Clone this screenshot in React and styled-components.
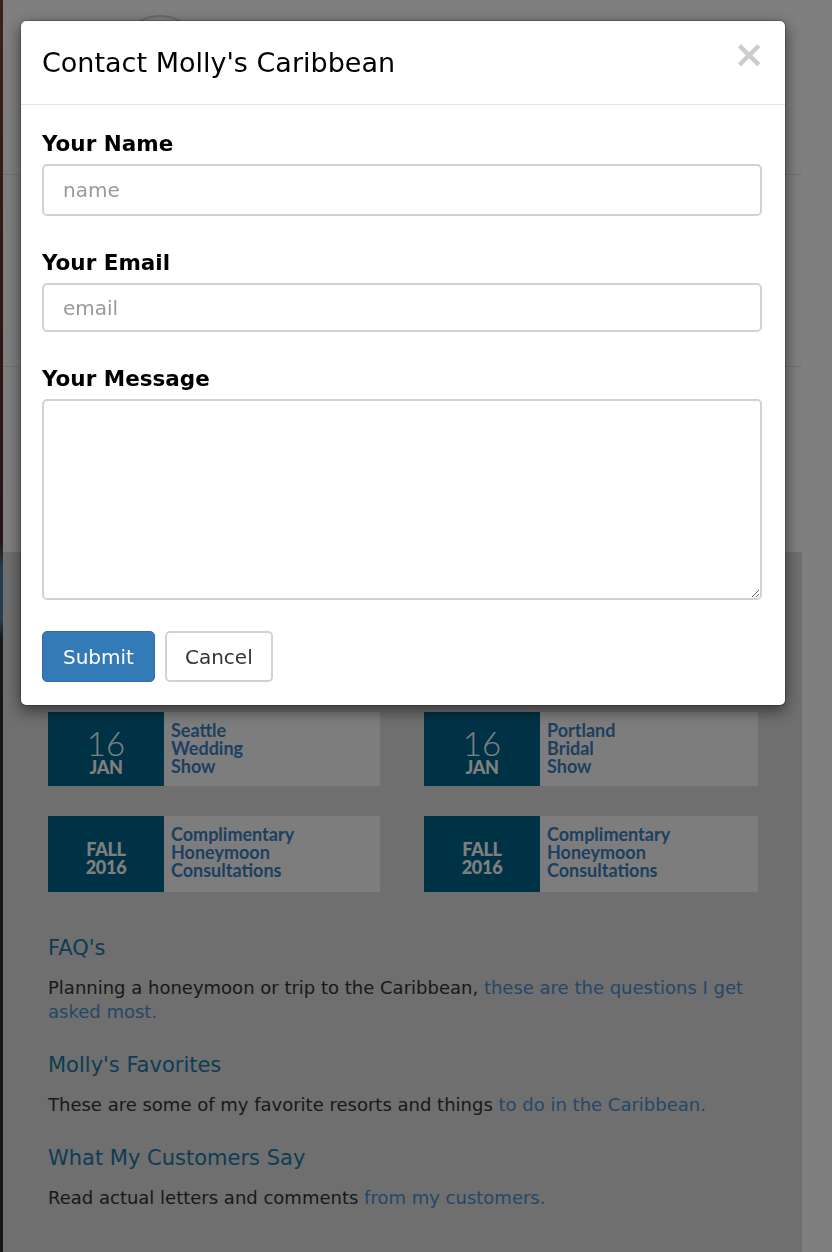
import React from 'react';
import styled, { createGlobalStyle } from 'styled-components';

const GlobalStyle = createGlobalStyle`
  html, body { margin: 0; padding: 0; background: #ffffff; }
  body { font-family: "DejaVu Sans", Verdana, sans-serif; color: #333; overflow: hidden; }
  * { box-sizing: border-box; }
`;

/* ---------- underlying page ---------- */
const Page = styled.div`
  display: flex;
  width: 832px;
  height: 1252px;
  background: #ffffff;
`;

const EdgePhoto = styled.div`
  width: 3px;
  flex: none;
  background: linear-gradient(
    to bottom,
    #7a4036 0px,
    #5e302c 300px,
    #4e2a2a 540px,
    #4a7aa0 570px,
    #4a7aa0 620px,
    #2c2c2c 640px,
    #2c2c2c 100%
  );
`;

const Main = styled.div`
  width: 799px;
  flex: none;
  display: flex;
  flex-direction: column;
`;

const TopSection = styled.section`
  height: 552px;
  display: flex;
  flex-direction: column;
`;

const Masthead = styled.div`
  height: 175px;
  border-bottom: 1px solid #e4e4e4;
  padding: 15px 0 0 114px;
`;

const Avatar = styled.div`
  width: 86px;
  height: 86px;
  border-radius: 50%;
  border: 2px solid #d4d4d4;
  background: #ffffff;
`;

const Band = styled.div`
  height: 192px;
  border-bottom: 1px solid #e4e4e4;
`;

const GreySection = styled.section`
  flex: 1;
  background: #dedede;
  padding: 160px 0 0 45px;
`;

const EventGrid = styled.div`
  display: grid;
  grid-template-columns: 332px 334px;
  column-gap: 44px;
  row-gap: 30px;
  width: 710px;
`;

const EventCard = styled.a`
  display: flex;
  height: ${(p) => (p.$tall ? '76px' : '74px')};
  background: #fbfbfb;
  text-decoration: none;
`;

const DateBox = styled.div`
  width: 116px;
  flex: none;
  background: #00658c;
  color: #ffffff;
  font-family: Lato, "Liberation Sans", sans-serif;
  display: flex;
  flex-direction: column;
  align-items: center;
  justify-content: center;
  padding-top: ${(p) => (p.$season ? '8px' : '6px')};
`;

const Day = styled.span`
  font-weight: 300;
  font-size: 33px;
  line-height: 30px;
`;

const DateWord = styled.span`
  font-weight: 900;
  font-size: 18px;
  line-height: 18px;
  letter-spacing: -0.3px;
`;

const EventTitle = styled.div`
  padding: 9px 0 0 7px;
  font-family: Lato, "Liberation Sans", sans-serif;
  font-weight: 700;
  font-size: 18px;
  line-height: 18px;
  color: #3a80c0;
`;

const InfoList = styled.div`
  width: 711px;
  margin-top: 45px;
  display: flex;
  flex-direction: column;
`;

const InfoHeading = styled.h3`
  margin: 0 0 16px 0;
  font-weight: 400;
  font-size: 21px;
  line-height: 1.1;
  color: #1a7aa6;
`;

const InfoText = styled.p`
  margin: 0 0 30px 0;
  font-size: 18px;
  line-height: 24px;
  color: #333333;
`;

const InfoLink = styled.a`
  color: #4a90d0;
  text-decoration: none;
`;

/* ---------- modal ---------- */
const Backdrop = styled.div`
  position: fixed;
  inset: 0;
  background: rgba(0, 0, 0, 0.5);
`;

const Dialog = styled.div`
  position: fixed;
  left: 20px;
  top: 20px;
  width: 766px;
  background: #ffffff;
  border: 1px solid rgba(0, 0, 0, 0.2);
  border-radius: 6px;
  box-shadow: 0 5px 15px rgba(0, 0, 0, 0.5);
  background-clip: padding-box;
`;

const Header = styled.div`
  height: 84px;
  padding: 0 20px 0 21px;
  border-bottom: 1px solid #e5e5e5;
  display: flex;
  align-items: center;
  justify-content: space-between;
`;

const Title = styled.h4`
  margin: 0;
  font-weight: 400;
  font-size: 27px;
  line-height: 1.1;
  color: #000000;
`;

const Close = styled.button`
  align-self: flex-start;
  margin-top: 14px;
  padding: 0;
  border: 0;
  background: transparent;
  font-family: "DejaVu Sans", sans-serif;
  font-weight: 700;
  font-size: 38px;
  line-height: 38px;
  color: #cccccc;
  cursor: pointer;
`;

const Body = styled.form`
  padding: 27px 23px 23px 21px;
  display: flex;
  flex-direction: column;
`;

const Group = styled.div`
  display: flex;
  flex-direction: column;
  margin-bottom: ${(p) => p.$gap || '35px'};
`;

const Label = styled.label`
  font-weight: 700;
  font-size: 21.5px;
  line-height: 24px;
  color: #000000;
  margin-bottom: 8px;
`;

const Input = styled.input`
  height: ${(p) => p.$h};
  width: 100%;
  padding: 0 19px;
  border: 2px solid #d2d2d2;
  border-radius: 5px;
  font-family: "DejaVu Sans", sans-serif;
  font-size: 20px;
  color: #555;
  outline: none;
  &::placeholder { color: #999999; }
`;

const TextArea = styled.textarea`
  height: 201px;
  width: 100%;
  padding: 10px 19px;
  border: 2px solid #d2d2d2;
  border-radius: 5px;
  font-family: "DejaVu Sans", sans-serif;
  font-size: 20px;
  color: #555;
  resize: both;
  outline: none;
`;

const Actions = styled.div`
  display: flex;
  gap: 10px;
`;

const Button = styled.button`
  height: 51px;
  padding: ${(p) => (p.$primary ? '0 20px' : '0 18px')};
  border-radius: 5px;
  font-family: "DejaVu Sans", sans-serif;
  font-size: 20px;
  cursor: pointer;
  border: ${(p) => (p.$primary ? '1px solid #2e6da4' : '2px solid #d2d2d2')};
  background: ${(p) => (p.$primary ? '#337ab7' : '#ffffff')};
  color: ${(p) => (p.$primary ? '#ffffff' : '#333333')};
`;

const events = [
  { day: '16', word: 'JAN', title: ['Seattle', 'Wedding', 'Show'] },
  { day: '16', word: 'JAN', title: ['Portland', 'Bridal', 'Show'] },
  { season: ['FALL', '2016'], title: ['Complimentary', 'Honeymoon', 'Consultations'] },
  { season: ['FALL', '2016'], title: ['Complimentary', 'Honeymoon', 'Consultations'] },
];

export default function App() {
  return (
    <>
      <GlobalStyle />
      <Page>
        <EdgePhoto />
        <Main>
          <TopSection>
            <Masthead>
              <Avatar />
            </Masthead>
            <Band />
          </TopSection>
          <GreySection>
            <EventGrid>
              {events.map((e, i) => (
                <EventCard key={i} href="#" $tall={!!e.season}>
                  <DateBox $season={!!e.season}>
                    {e.season ? (
                      <>
                        <DateWord>{e.season[0]}</DateWord>
                        <DateWord>{e.season[1]}</DateWord>
                      </>
                    ) : (
                      <>
                        <Day>{e.day}</Day>
                        <DateWord>{e.word}</DateWord>
                      </>
                    )}
                  </DateBox>
                  <EventTitle>
                    {e.title.map((t) => (
                      <div key={t}>{t}</div>
                    ))}
                  </EventTitle>
                </EventCard>
              ))}
            </EventGrid>
            <InfoList>
              <InfoHeading>FAQ's</InfoHeading>
              <InfoText>
                Planning a honeymoon or trip to the Caribbean,{' '}
                <InfoLink href="#">these are the questions I get asked most.</InfoLink>
              </InfoText>
              <InfoHeading>Molly's Favorites</InfoHeading>
              <InfoText>
                These are some of my favorite resorts and things{' '}
                <InfoLink href="#">to do in the Caribbean.</InfoLink>
              </InfoText>
              <InfoHeading>What My Customers Say</InfoHeading>
              <InfoText>
                Read actual letters and comments{' '}
                <InfoLink href="#">from my customers.</InfoLink>
              </InfoText>
            </InfoList>
          </GreySection>
        </Main>
      </Page>

      <Backdrop />
      <Dialog role="dialog">
        <Header>
          <Title>Contact Molly's Caribbean</Title>
          <Close type="button" aria-label="Close">×</Close>
        </Header>
        <Body onSubmit={(e) => e.preventDefault()}>
          <Group>
            <Label htmlFor="cname">Your Name</Label>
            <Input id="cname" $h="52px" placeholder="name" />
          </Group>
          <Group>
            <Label htmlFor="cemail">Your Email</Label>
            <Input id="cemail" $h="49px" placeholder="email" />
          </Group>
          <Group $gap="31px">
            <Label htmlFor="cmsg">Your Message</Label>
            <TextArea id="cmsg" />
          </Group>
          <Actions>
            <Button type="submit" $primary>Submit</Button>
            <Button type="button">Cancel</Button>
          </Actions>
        </Body>
      </Dialog>
    </>
  );
}
